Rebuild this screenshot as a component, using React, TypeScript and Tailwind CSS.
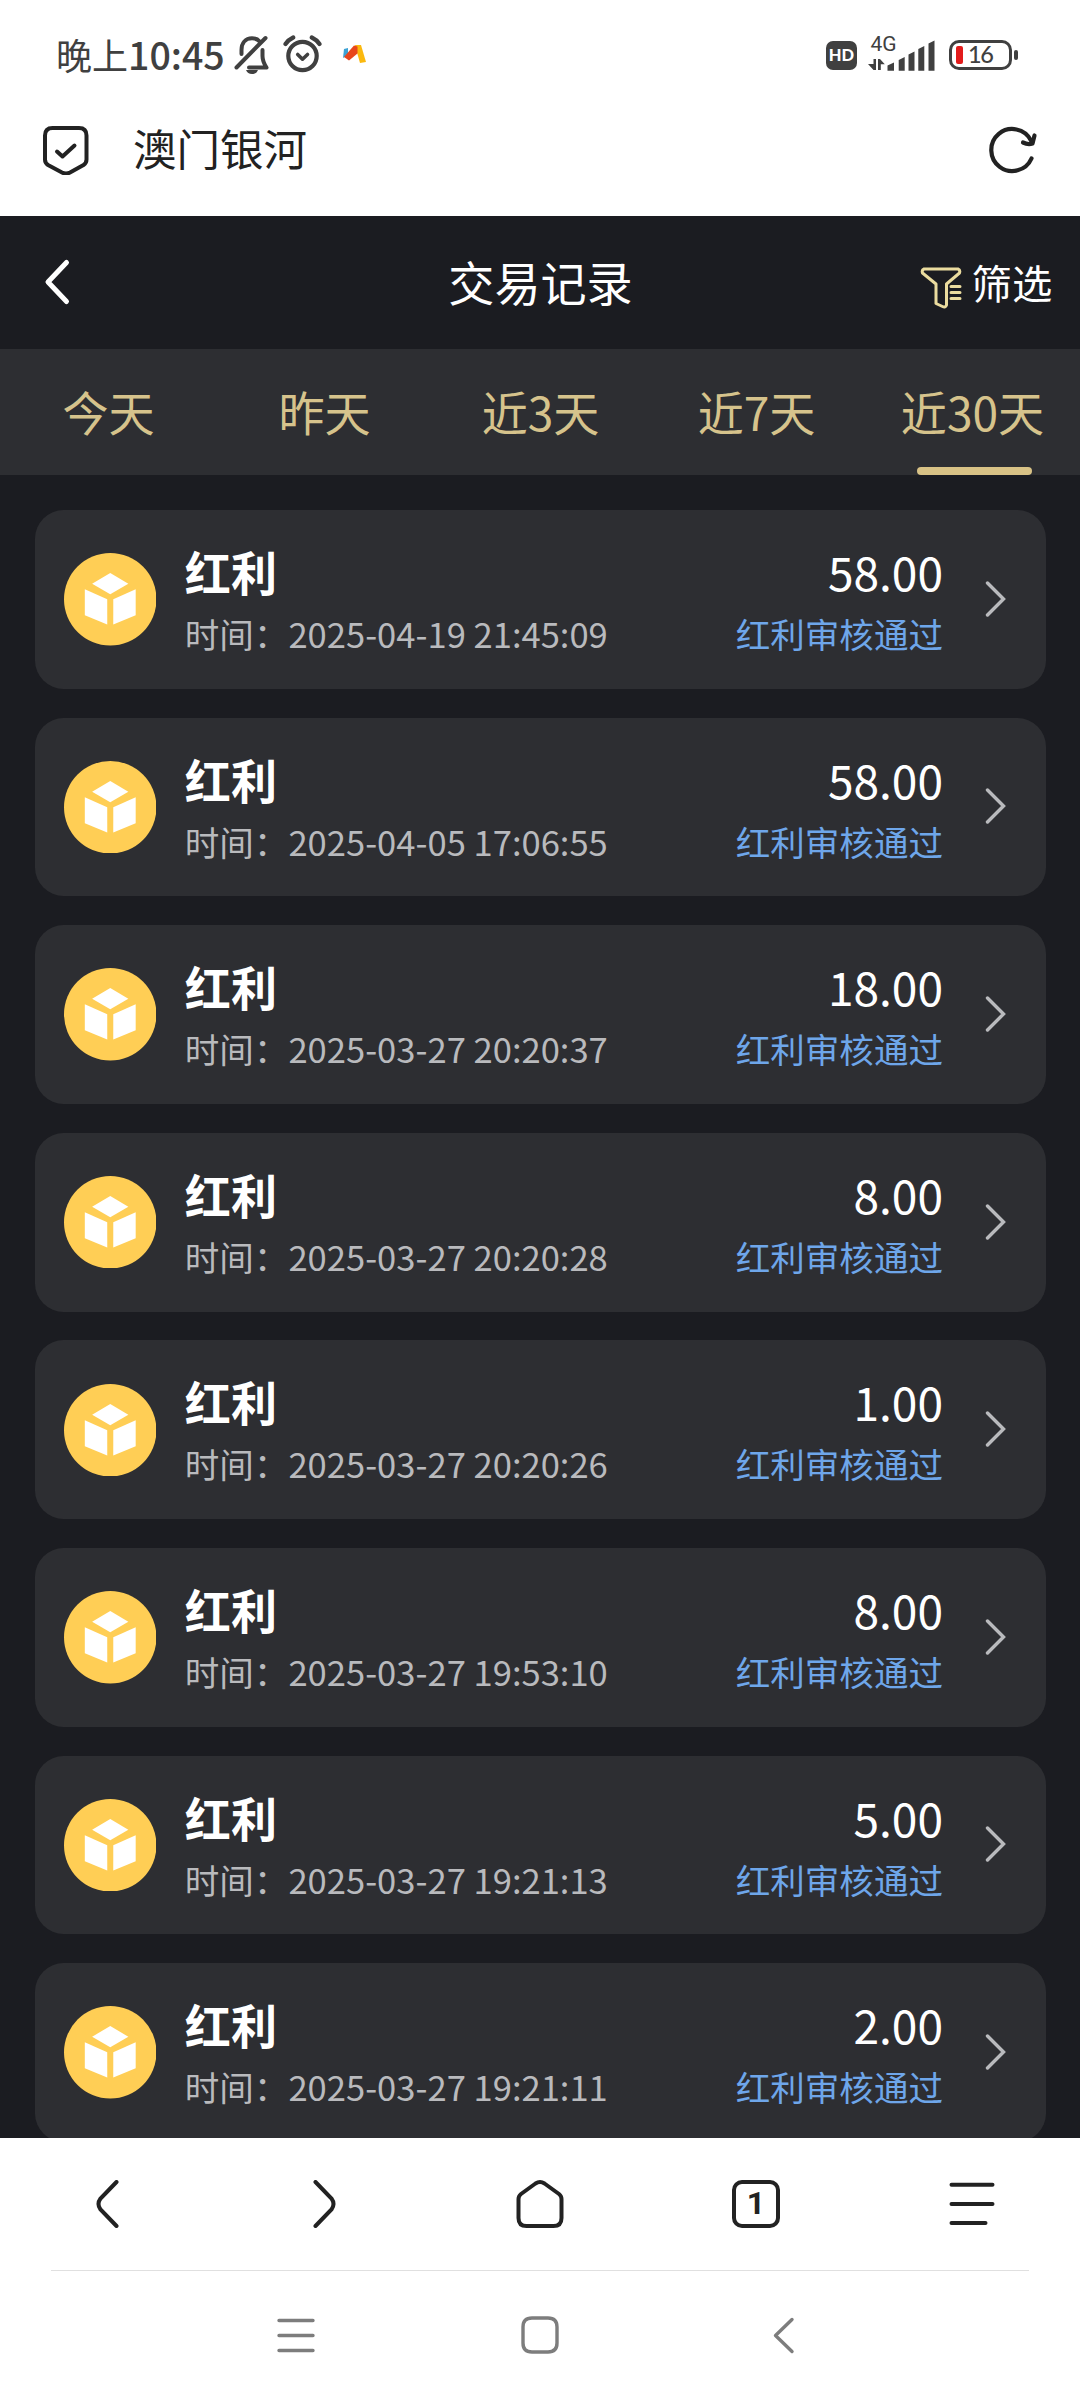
import React from "react";

const records = [
  { time: "2025-04-19 21:45:09", amount: "58.00" },
  { time: "2025-04-05 17:06:55", amount: "58.00" },
  { time: "2025-03-27 20:20:37", amount: "18.00" },
  { time: "2025-03-27 20:20:28", amount: "8.00" },
  { time: "2025-03-27 20:20:26", amount: "1.00" },
  { time: "2025-03-27 19:53:10", amount: "8.00" },
  { time: "2025-03-27 19:21:13", amount: "5.00" },
  { time: "2025-03-27 19:21:11", amount: "2.00" },
];

const tabs = ["今天", "昨天", "近3天", "近7天", "近30天"];

function StatusBar() {
  return (
    <div className="flex h-[108px] items-center justify-between pl-14 pr-[62px] text-[#404040]">
      <div className="flex items-center">
        <span className="w-[178px] whitespace-nowrap text-[37.5px] font-medium leading-[40px]">
          <span className="text-[36px] font-normal">晚上</span>10:45
        </span>
        <svg className="h-10 w-9" viewBox="0 0 36 40" fill="none" stroke="currentColor" strokeWidth="4" strokeLinecap="round" strokeLinejoin="round">
          <path d="M7.500 20v-4C7.500 9 11.500 4.200 18 4.200c3.500 0 6 1.200 8 3.500M28.500 16v6c0 4 1 7 4 11.500H15" />
          <path d="M2.500 33.500L31.500 4" />
          <path d="M12 36h12c-1 2.600-3 4-6 4s-5-1.400-6-4z" fill="currentColor" stroke="none" />
        </svg>
        <svg className="ml-[13px] h-10 w-10" viewBox="0 0 40 40" fill="none" stroke="currentColor" strokeWidth="4.200" strokeLinecap="round" strokeLinejoin="round">
          <circle cx="19.500" cy="22" r="14.200" />
          <path d="M2.500 10C4.500 7 7 5 10.200 3.500M28.800 3.500C32 5 34.500 7 36.500 10" />
          <path d="M14.700 20.500L19.500 25.200l5-4.700" strokeWidth="3.600" />
        </svg>
        <svg className="ml-[20px] h-5 w-[23px]" viewBox="0 0 23 20">
          <path d="M1 5l4-1v7l-5 3z" fill="#3da2d4" />
          <path d="M12 1h6l5 17-6 1-4-14z" fill="#fbb90f" />
          <path d="M1 13L11 1.500l3.500 1V9.500L6 16.500z" fill="#e8461c" />
        </svg>
      </div>
      <div className="flex items-center">
        <span className="mt-[2px] flex h-[29px] w-[31px] items-center justify-center rounded-[7px] bg-[#404040] font-['Lato'] text-[16.500px] font-black leading-none text-white">
          HD
        </span>
        <svg className="ml-[11px] h-[52px] w-[68px] overflow-visible" viewBox="868 28 68 52" fill="currentColor">
          <text x="870.500" y="51" fontFamily="Roboto" fontSize="21">4G</text>
          <path d="M873.500 59h2.500v11h-2.500l-5.500-6h5.500zM878 70h2.800v-5.800h4l-4.800-5.200h-2z" />
          <path d="M887.500 65.500l6.500-3v8.300h-6.500zM898.700 60l6-3v13.800h-6zM908.500 54.500l6-3v19.300h-6zM918.300 49l6-3v24.800h-6zM928.500 43.500l6-3v30.300h-6z" />
        </svg>
        <div className="ml-[13px] mt-[2px] flex h-[30px] w-[63px] items-center rounded-[10px] border-[3px] border-[#404040] pl-[4px]">
          <span className="h-[18px] w-[7px] rounded-[2px] bg-[#e21b1b]" />
          <span className="ml-[5px] font-['Lato'] text-[23.500px] font-medium leading-none tracking-[-1.500px]">16</span>
        </div>
        <span className="ml-[2px] mt-[2px] h-[10px] w-1 rounded-[2px] bg-[#404040]" />
      </div>
    </div>
  );
}

function AddressBar() {
  return (
    <div className="flex h-[108px] items-center pl-[42px] pr-[42px] text-[#222]">
      <svg className="-mt-[24px] h-[50px] w-[48px]" viewBox="0 0 48 50" fill="none" stroke="currentColor" strokeWidth="4" strokeLinecap="round" strokeLinejoin="round">
        <path d="M10.500 3h26.500q7.500 0 7.500 7.500v24q0 3.500-3 5.500l-13.500 7.500q-4 2-8 0L6 40q-3-2-3-5.500v-24q0-7.500 7.500-7.500z" />
        <path d="M15 26.500l5.500 5L32.500 20.500" />
      </svg>
      <span className="-mt-[28px] ml-[43px] flex-1 text-[43.500px] leading-[60px]">澳门银河</span>
      <svg className="-mt-[24px] h-[48px] w-[50px]" viewBox="0 0 50 48" fill="none" stroke="currentColor" strokeWidth="4.200" strokeLinecap="round" strokeLinejoin="round">
        <path d="M43.500 32.500A21 21 0 1 1 43 14.500" />
        <path d="M46.500 9.500L44.500 17.500Q40 19 35 16.500" />
      </svg>
    </div>
  );
}

function TitleBar() {
  return (
    <div className="grid h-[133px] grid-cols-3 items-center bg-[#1b1c21] pl-[43px] pr-[28.800px] text-white">
      <svg className="-mt-[2px] h-[48px] w-[30px]" viewBox="0 0 30 48" fill="none" stroke="currentColor" strokeWidth="5" strokeLinecap="round" strokeLinejoin="round">
        <path d="M23.500 4.500L5 24l18.500 19.500" />
      </svg>
      <h1 className="-mt-[3px] pr-[13.200px] text-center text-[46.080px] leading-[60px]">交易记录</h1>
      <div className="flex items-center justify-end">
        <svg className="mt-[10px] h-[42px] w-[42px]" viewBox="0 0 42 42" fill="none" stroke="#ebdc9f" strokeWidth="3" strokeLinecap="round" strokeLinejoin="round">
          <path d="M4 2h34q2.500 1 1.500 4L26.500 17v21q-1 3-4 1.500L16 36.500V17L2.500 6Q1.500 3 4 2z" />
          <path d="M31 19.500h9M31 25.500h9M31 31.500h9" />
        </svg>
        <span className="-mr-[1px] -mt-[2px] ml-[10px] text-[40.320px] leading-[60px]">筛选</span>
      </div>
    </div>
  );
}

function DayTabs() {
  return (
    <div className="grid h-[126px] grid-cols-5 bg-[#2d2e32]">
      {tabs.map((tab, i) => (
        <div key={tab} className="relative flex items-center justify-center whitespace-nowrap pb-[3px] pl-px text-[46.080px] leading-[60px] text-[#d6c38c]">
          {tab}
          {i === tabs.length - 1 && (
            <span className="absolute bottom-0 left-[53px] h-[8px] w-[115px] rounded-full bg-[#d8c286]" />
          )}
        </div>
      ))}
    </div>
  );
}

function RecordCard({ time, amount }: { time: string; amount: string }) {
  return (
    <div className="flex h-[178.800px] shrink-0 rounded-[28.800px] bg-[#2d2e32] pl-[28.500px] pr-[40px]">
      <svg className="h-[92.500px] w-[92.500px] self-center" viewBox="0 0 92 92">
        <circle cx="46" cy="46" r="46" fill="#ffce55" />
        <g fill="#fff">
          <path d="M46 20L64 30.500 46 41 28 30.500z" />
          <path d="M20.700 36L43 46v25.200L20.700 62z" />
          <path d="M71.300 36L49 46v25.200L71.300 62z" />
        </g>
      </svg>
      <div className="ml-[28.800px] flex-1 pt-[30px]">
        <div className="text-[46.080px] font-bold leading-[62px] text-white">红利</div>
        <div className="text-[34.560px] leading-[62px] text-[#b9babd]">时间：{time}</div>
      </div>
      <div className="pt-[30px] text-right">
        <div className="text-[46.080px] leading-[62px] text-white">{amount}</div>
        <div className="text-[34.560px] leading-[62px] text-[#6ea6ea]">红利审核通过</div>
      </div>
      <svg className="-mt-px ml-[42px] h-[36px] w-[21px] self-center" viewBox="0 0 21 36" fill="none" stroke="#b9babd" strokeWidth="3.400" strokeLinecap="round" strokeLinejoin="miter">
        <path d="M2.500 2l16 16L2.500 34" />
      </svg>
    </div>
  );
}

function BrowserNav() {
  return (
    <div className="mx-auto grid h-[132px] grid-cols-5 items-center justify-items-center text-[#222]">
      <svg className="h-[48px] w-[24px]" viewBox="0 0 24 48" fill="none" stroke="currentColor" strokeWidth="4" strokeLinecap="round">
        <path d="M20.500 2L4.500 18.500q-4 5.500 0 11L20.500 46" />
      </svg>
      <svg className="h-[48px] w-[24px]" viewBox="0 0 24 48" fill="none" stroke="currentColor" strokeWidth="4" strokeLinecap="round">
        <path d="M3.500 2l16 16.500q4 5.500 0 11L3.500 46" />
      </svg>
      <svg className="h-[50px] w-[50px]" viewBox="0 0 50 50" fill="none" stroke="currentColor" strokeWidth="4" strokeLinejoin="round">
        <path d="M20.500 4.500q4.500-3 9 0L44 15q2.500 2 2.500 5v19q0 8-8 8h-27q-8 0-8-8V20q0-3 2.500-5z" />
      </svg>
      <span className="flex h-[48px] w-[48px] items-center justify-center rounded-[10px] border-4 border-[#222] font-['Roboto'] text-[32px] font-bold leading-none">
        <span className="-mt-[3px]">1</span>
      </span>
      <svg className="h-[48px] w-[46px]" viewBox="0 0 46 48" fill="none" stroke="currentColor" strokeWidth="4" strokeLinecap="round">
        <path d="M2.500 4.700h41M2.500 24h41M2.500 43h34" />
      </svg>
    </div>
  );
}

function SystemNav() {
  return (
    <div className="flex h-[128px] items-center justify-center text-[#7d7d7d]">
      <svg className="mr-[206.500px] h-[38px] w-[38px]" viewBox="0 0 38 38" fill="none" stroke="currentColor" strokeWidth="3.400" strokeLinecap="round">
        <path d="M2 4.500h34M2 19.500h34M2 34.500h34" />
      </svg>
      <svg className="h-[38px] w-[38px]" viewBox="0 0 38 38" fill="none" stroke="currentColor" strokeWidth="3.400">
        <path d="M11 2h16q9 0 9 9v16q0 9-9 9H11q-9 0-9-9V11q0-9 9-9z" />
      </svg>
      <svg className="ml-[206.500px] h-[38px] w-[38px]" viewBox="0 0 38 38" fill="none" stroke="currentColor" strokeWidth="3.400" strokeLinecap="round" strokeLinejoin="round">
        <path d="M26 3.500L9.500 19.500 26 35.500" />
      </svg>
    </div>
  );
}

export default function App() {
  return (
    <div className="flex h-[2400px] w-[1080px] flex-col overflow-hidden bg-[#1b1c21] font-['Noto_Sans_CJK_SC',sans-serif]">
      <header className="h-[216px] shrink-0 bg-white">
        <StatusBar />
        <AddressBar />
      </header>
      <main className="h-[1922px] shrink-0 overflow-hidden">
        <TitleBar />
        <DayTabs />
        <div className="flex flex-col gap-[28.800px] pl-[35px] pr-[34px] pt-[35px]">
          {records.map((record) => (
            <RecordCard key={record.time} time={record.time} amount={record.amount} />
          ))}
        </div>
      </main>
      <footer className="h-[262px] shrink-0 bg-white">
        <BrowserNav />
        <div className="mx-[51px] h-px bg-[#e0e0e0]" />
        <SystemNav />
      </footer>
    </div>
  );
}
